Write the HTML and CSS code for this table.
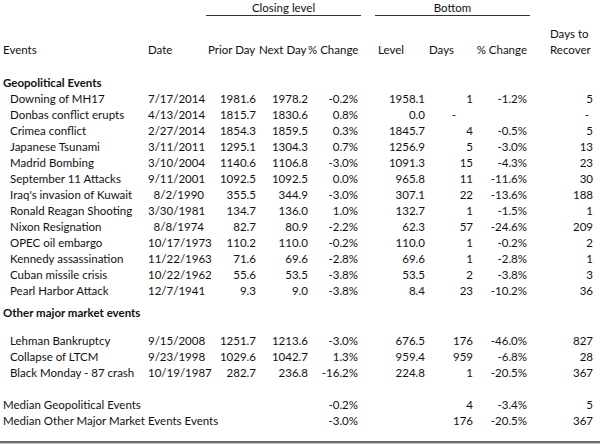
FILE: index.html
```html
<!DOCTYPE html>
<html>
<head>
<meta charset="utf-8">
<link rel="stylesheet" href="styles.css">
</head>
<body>
<div class="sheet">
  <div class="row title-row">
    <div class="grp grp-closing">Closing level</div>
    <div class="grp grp-bottom">Bottom</div>
  </div>
  <div class="row head-row">
    <div class="h h-events">Events</div>
    <div class="h h-date">Date</div>
    <div class="h h-prior">Prior Day</div>
    <div class="h h-next">Next Day</div>
    <div class="h h-chg">% Change</div>
    <div class="h h-level">Level</div>
    <div class="h h-days">Days</div>
    <div class="h h-chg2">% Change</div>
    <div class="h h-rec">Days to<br>Recover</div>
  </div>
  <div class="row section first-section"><div class="name bold">Geopolitical Events</div></div>

  <div class="row data"><div class="name ind">Downing of MH17</div><div>7/17/2014</div><div>1981.6</div><div>1978.2</div><div>-0.2%</div><div>1958.1</div><div>1</div><div>-1.2%</div><div>5</div></div>
  <div class="row data"><div class="name ind">Donbas conflict erupts</div><div>4/13/2014</div><div>1815.7</div><div>1830.6</div><div>0.8%</div><div>0.0</div><div class="dash-days">-</div><div></div><div class="dash-rec">-</div></div>
  <div class="row data"><div class="name ind">Crimea conflict</div><div>2/27/2014</div><div>1854.3</div><div>1859.5</div><div>0.3%</div><div>1845.7</div><div>4</div><div>-0.5%</div><div>5</div></div>
  <div class="row data"><div class="name ind">Japanese Tsunami</div><div>3/11/2011</div><div>1295.1</div><div>1304.3</div><div>0.7%</div><div>1256.9</div><div>5</div><div>-3.0%</div><div>13</div></div>
  <div class="row data"><div class="name ind">Madrid Bombing</div><div>3/10/2004</div><div>1140.6</div><div>1106.8</div><div>-3.0%</div><div>1091.3</div><div>15</div><div>-4.3%</div><div>23</div></div>
  <div class="row data"><div class="name ind">September 11 Attacks</div><div>9/11/2001</div><div>1092.5</div><div>1092.5</div><div>0.0%</div><div>965.8</div><div>11</div><div>-11.6%</div><div>30</div></div>
  <div class="row data"><div class="name ind">Iraq's invasion of Kuwait</div><div>8/2/1990</div><div>355.5</div><div>344.9</div><div>-3.0%</div><div>307.1</div><div>22</div><div>-13.6%</div><div>188</div></div>
  <div class="row data"><div class="name ind">Ronald Reagan Shooting</div><div>3/30/1981</div><div>134.7</div><div>136.0</div><div>1.0%</div><div>132.7</div><div>1</div><div>-1.5%</div><div>1</div></div>
  <div class="row data"><div class="name ind">Nixon Resignation</div><div>8/8/1974</div><div>82.7</div><div>80.9</div><div>-2.2%</div><div>62.3</div><div>57</div><div>-24.6%</div><div>209</div></div>
  <div class="row data"><div class="name ind">OPEC oil embargo</div><div>10/17/1973</div><div>110.2</div><div>110.0</div><div>-0.2%</div><div>110.0</div><div>1</div><div>-0.2%</div><div>2</div></div>
  <div class="row data"><div class="name ind">Kennedy assassination</div><div>11/22/1963</div><div>71.6</div><div>69.6</div><div>-2.8%</div><div>69.6</div><div>1</div><div>-2.8%</div><div>1</div></div>
  <div class="row data"><div class="name ind">Cuban missile crisis</div><div>10/22/1962</div><div>55.6</div><div>53.5</div><div>-3.8%</div><div>53.5</div><div>2</div><div>-3.8%</div><div>3</div></div>
  <div class="row data"><div class="name ind">Pearl Harbor Attack</div><div>12/7/1941</div><div>9.3</div><div>9.0</div><div>-3.8%</div><div>8.4</div><div>23</div><div>-10.2%</div><div>36</div></div>

  <div class="row section second-section"><div class="name bold">Other major market events</div></div>
  <div class="row data market-first"><div class="name ind">Lehman Bankruptcy</div><div>9/15/2008</div><div>1251.7</div><div>1213.6</div><div>-3.0%</div><div>676.5</div><div>176</div><div>-46.0%</div><div>827</div></div>
  <div class="row data"><div class="name ind">Collapse of LTCM</div><div>9/23/1998</div><div>1029.6</div><div>1042.7</div><div>1.3%</div><div>959.4</div><div>959</div><div>-6.8%</div><div>28</div></div>
  <div class="row data"><div class="name ind">Black Monday - 87 crash</div><div>10/19/1987</div><div>282.7</div><div>236.8</div><div>-16.2%</div><div>224.8</div><div>1</div><div>-20.5%</div><div>367</div></div>

  <div class="row data median-first"><div class="name wide">Median Geopolitical Events</div><div>-0.2%</div><div></div><div>4</div><div>-3.4%</div><div>5</div></div>
  <div class="row data"><div class="name wide">Median Other Major Market Events Events</div><div>-3.0%</div><div></div><div>176</div><div>-20.5%</div><div>367</div></div>
  <div class="bottom-rule"></div>
</div>
</body>
</html>
```
FILE: styles.css
```css
html, body {
  margin: 0;
  padding: 0;
  background: #ffffff;
}
body {
  font-family: Lato, "Open Sans", sans-serif;
  font-size: 11.5px;
  color: #111111;
}
.sheet {
  width: 600px;
  height: 444px;
  overflow: hidden;
}
.row {
  display: grid;
  grid-template-columns: 148px 56px 52px 52px 50px 67px 48px 54px 66px;
  height: 16px;
  line-height: 16px;
  white-space: nowrap;
}
.data > div {
  text-align: right;
}
.data > .name {
  text-align: left;
  padding-left: 3px;
}
.data > .ind {
  padding-left: 10px;
}
.data > .wide {
  grid-column: 1 / 5;
}
.bold {
  font-weight: bold;
  padding-left: 3px;
}
.title-row {
  height: 16px;
  line-height: 16px;
}
.grp {
  text-align: center;
  border-bottom: 1px solid #333333;
  height: 15px;
}
.grp-closing {
  grid-column: 3 / 6;
  margin-left: 2px;
  margin-right: -3px;
}
.grp-bottom {
  grid-column: 6 / 9;
  margin-left: 17px;
  margin-right: -3px;
}
.head-row {
  margin-top: 10px;
  height: 32px;
  line-height: 16px;
  align-items: end;
}
.h-events { padding-left: 3px; }
.h-date { padding-left: 0; }
.h-prior { padding-left: 4px; }
.h-next { padding-left: 3px; }
.h-chg { text-align: right; }
.h-level { padding-left: 20px; }
.h-days { padding-left: 4px; }
.h-chg2 { text-align: right; }
.h-rec { padding-left: 23px; }
.first-section {
  margin-top: 17px;
}
.second-section {
  margin-top: 6px;
}
.market-first {
  margin-top: 12px;
}
.median-first {
  margin-top: 16px;
}
.dash-days {
  padding-right: 17px;
}
.dash-rec {
  padding-right: 4px;
}
.bottom-rule {
  margin-top: 12px;
  height: 2px;
  background: #6a6a6a;
  border-bottom: 1px solid #c8c8c8;
}
```
